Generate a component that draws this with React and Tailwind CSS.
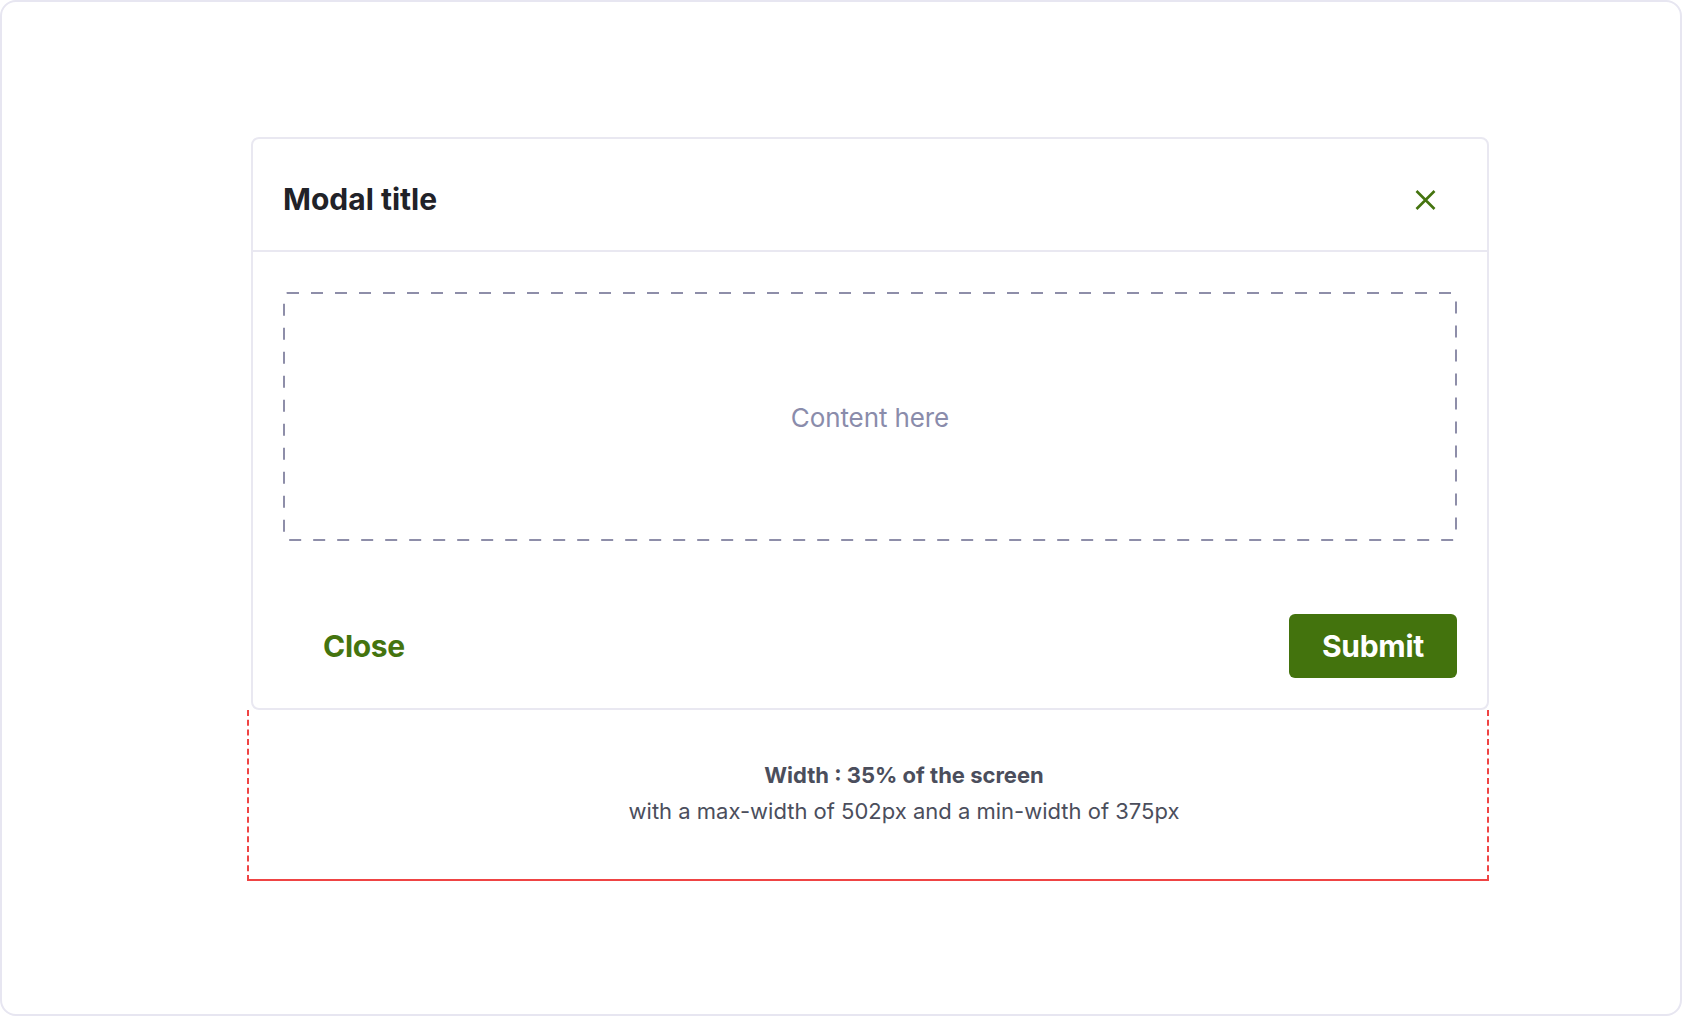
// Modal spec sheet: a modal with header, dashed content slot and footer, plus a width note

export default function App() {
  return (
    <div className="h-[1016px] w-full bg-white font-['Inter',sans-serif]">
      <div className="h-full rounded-[16px] border-2 border-[#e7e6f1] pt-[135px] pl-[245px]">
        <div className="w-[1242px]">
          {/* --- modal --- */}
          <div className="w-[1238px] ml-[4px] rounded-[8px] border-2 border-[#e9e8f1] bg-white">
            <div className="h-[113px] flex items-center justify-between pl-[30px] pr-[51px] pt-[10px] border-b-2 border-[#e9e8f1]">
              <h1 className="text-[30px] font-bold text-[#212228]">Modal title</h1>
              <button className="text-[#44740f]">
                <svg width="21" height="20" viewBox="0 0 21 20" fill="none">
                  <path d="M1.5 1L19.5 19M19.5 1L1.5 19" stroke="currentColor" strokeWidth="2.6" />
                </svg>
              </button>
            </div>

            <div className="px-[30px] pt-[40px] pb-[40px]">
              <div className="relative h-[249px] flex items-center justify-center">
                <svg className="absolute inset-0 h-full w-full" fill="none">
                  <rect x="1" y="1" width="1172" height="247" rx="3" stroke="#8e8ea9" strokeWidth="2" strokeDasharray="12 12" />
                </svg>
                <p className="text-[26px] text-[#8a8cab] tracking-[-0.1px] pt-[2px]">Content here</p>
              </div>
            </div>

            <div className="flex items-center justify-between px-[30px] pt-[33px] pb-[30px]">
              <button className="pl-[40px] text-[30px] font-bold text-[#44740f] tracking-[-0.3px]">Close</button>
              <button className="h-[64px] w-[168px] rounded-[6px] bg-[#43730d] text-[30px] font-bold text-white tracking-[-0.3px]">
                Submit
              </button>
            </div>
          </div>

          {/* --- red width annotation --- */}
          <div className="h-[171px] border-x-2 border-b-2 border-dashed border-[#ef4444] [border-bottom-style:solid] pt-[47px] pl-[72px] text-center text-[#4b4e5c]">
            <p className="text-[22px] font-bold leading-[36px]">Width : 35% of the screen</p>
            <p className="text-[22px] leading-[36px]">with a max-width of 502px and a min-width of 375px</p>
          </div>
        </div>
      </div>
    </div>
  );
}
